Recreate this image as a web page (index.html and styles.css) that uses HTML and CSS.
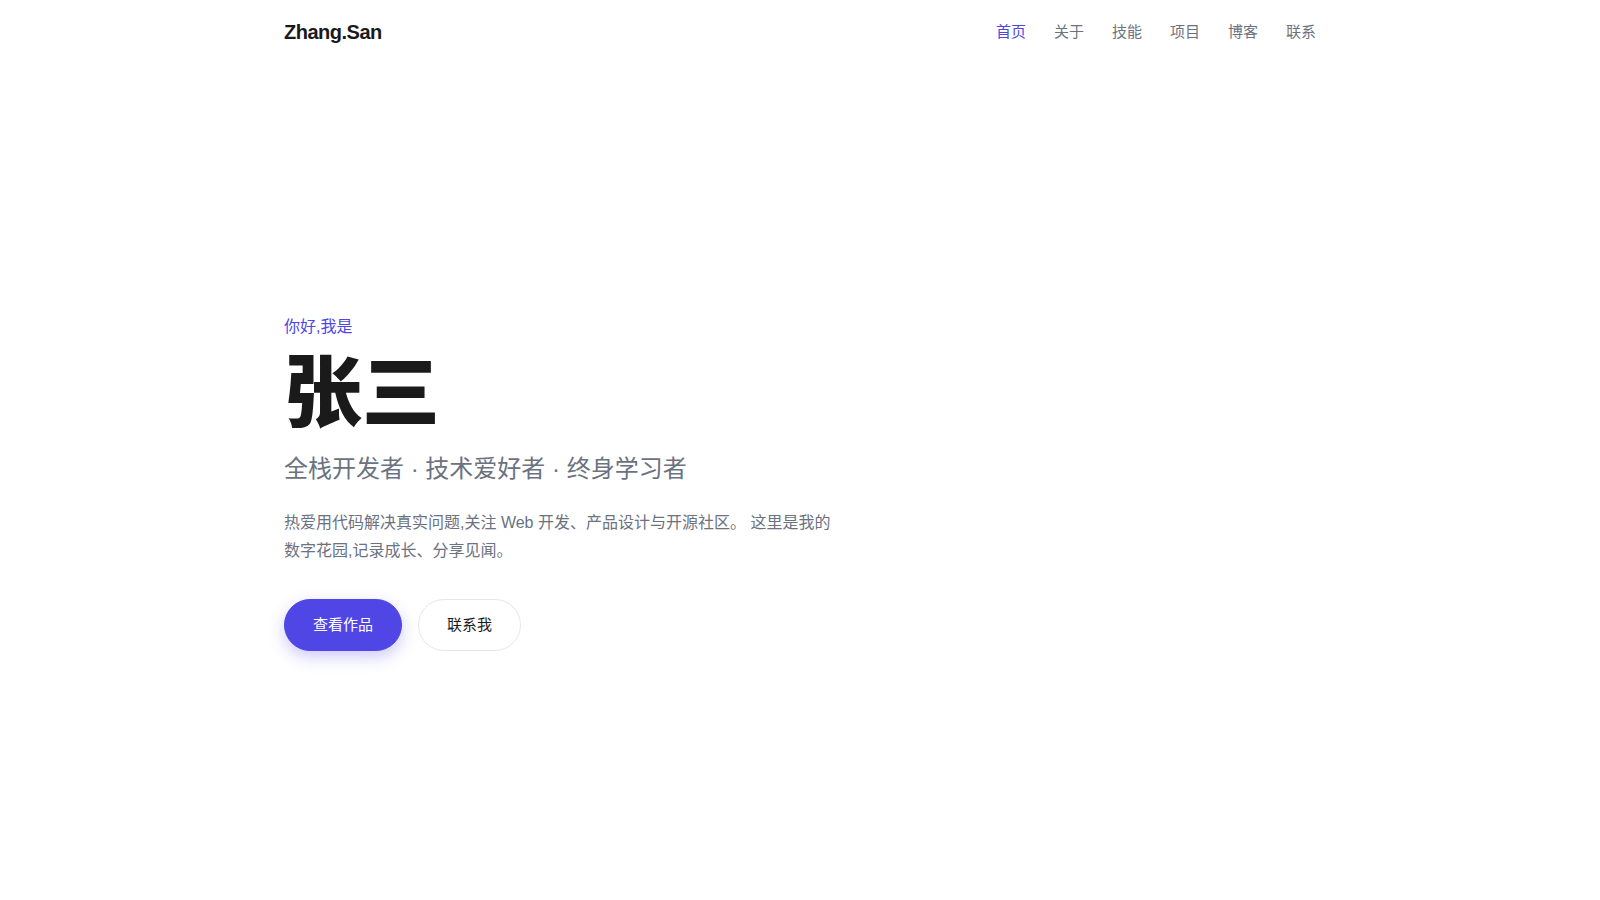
FILE: index.html
```html
<!DOCTYPE html>
<html lang="zh-CN">
<head>
<meta charset="utf-8">
<title>Zhang.San</title>
<link rel="stylesheet" href="styles.css">
</head>
<body>
<header class="nav">
  <div class="container nav-inner">
    <a class="logo" href="#">Zhang.San</a>
    <nav class="links">
      <a class="link active" href="#">首页</a>
      <a class="link" href="#">关于</a>
      <a class="link" href="#">技能</a>
      <a class="link" href="#">项目</a>
      <a class="link" href="#">博客</a>
      <a class="link" href="#">联系</a>
    </nav>
  </div>
</header>
<main class="hero">
  <div class="container hero-inner">
    <p class="greet">你好,我是</p>
    <h1 class="name">张三</h1>
    <p class="subtitle">全栈开发者 · 技术爱好者 · 终身学习者</p>
    <p class="desc">热爱用代码解决真实问题,关注 Web 开发、产品设计与开源社区。 这里是我的数字花园,记录成长、分享见闻。</p>
    <div class="actions">
      <a class="btn btn-primary" href="#">查看作品</a>
      <a class="btn btn-outline" href="#">联系我</a>
    </div>
  </div>
</main>
</body>
</html>
```

FILE: styles.css
```css
* { box-sizing: border-box; }
html, body { margin: 0; padding: 0; }
body {
  font-family: "Liberation Sans", "Noto Sans CJK SC", sans-serif;
  background: #ffffff;
  color: #1a1a1a;
}
a { text-decoration: none; color: inherit; }
.container {
  max-width: 1080px;
  margin: 0 auto;
  padding: 0 24px;
}
.nav { height: 64px; }
.nav-inner {
  height: 64px;
  display: flex;
  align-items: center;
  justify-content: space-between;
}
.logo {
  font-size: 20px;
  font-weight: 700;
  letter-spacing: -0.5px;
  color: #1a1a1a;
}
.links {
  display: flex;
  gap: 28px;
  padding-bottom: 4px;
}
.link {
  font-size: 15px;
  color: #6b7280;
}
.link.active { color: #4f46e5; }
.hero {
  min-height: calc(100vh - 64px);
  padding-top: 2px;
  display: flex;
  align-items: center;
}
.hero-inner { width: 100%; }
.greet {
  margin: 0 0 12px;
  font-size: 16px;
  line-height: 24px;
  color: #4f46e5;
}
.name {
  margin: 0 0 14px;
  font-size: 78px;
  line-height: 86px;
  font-weight: 800;
  color: #1a1a1a;
}
.subtitle {
  margin: 0 0 22px;
  font-size: 24px;
  line-height: 36px;
  color: #6b7280;
}
.desc {
  margin: 0 0 35px;
  max-width: 560px;
  font-size: 16px;
  line-height: 1.7;
  color: #6b7280;
}
.actions {
  display: flex;
  gap: 16px;
}
.btn {
  display: inline-block;
  padding: 14px 28px;
  font-size: 15px;
  line-height: 22px;
  border-radius: 999px;
}
.btn-primary {
  background: #4f46e5;
  color: #ffffff;
  border: 1px solid #4f46e5;
  box-shadow: 0 6px 16px rgba(79, 70, 229, 0.28);
}
.btn-outline {
  background: #ffffff;
  color: #1a1a1a;
  border: 1px solid #e5e7eb;
}
```
